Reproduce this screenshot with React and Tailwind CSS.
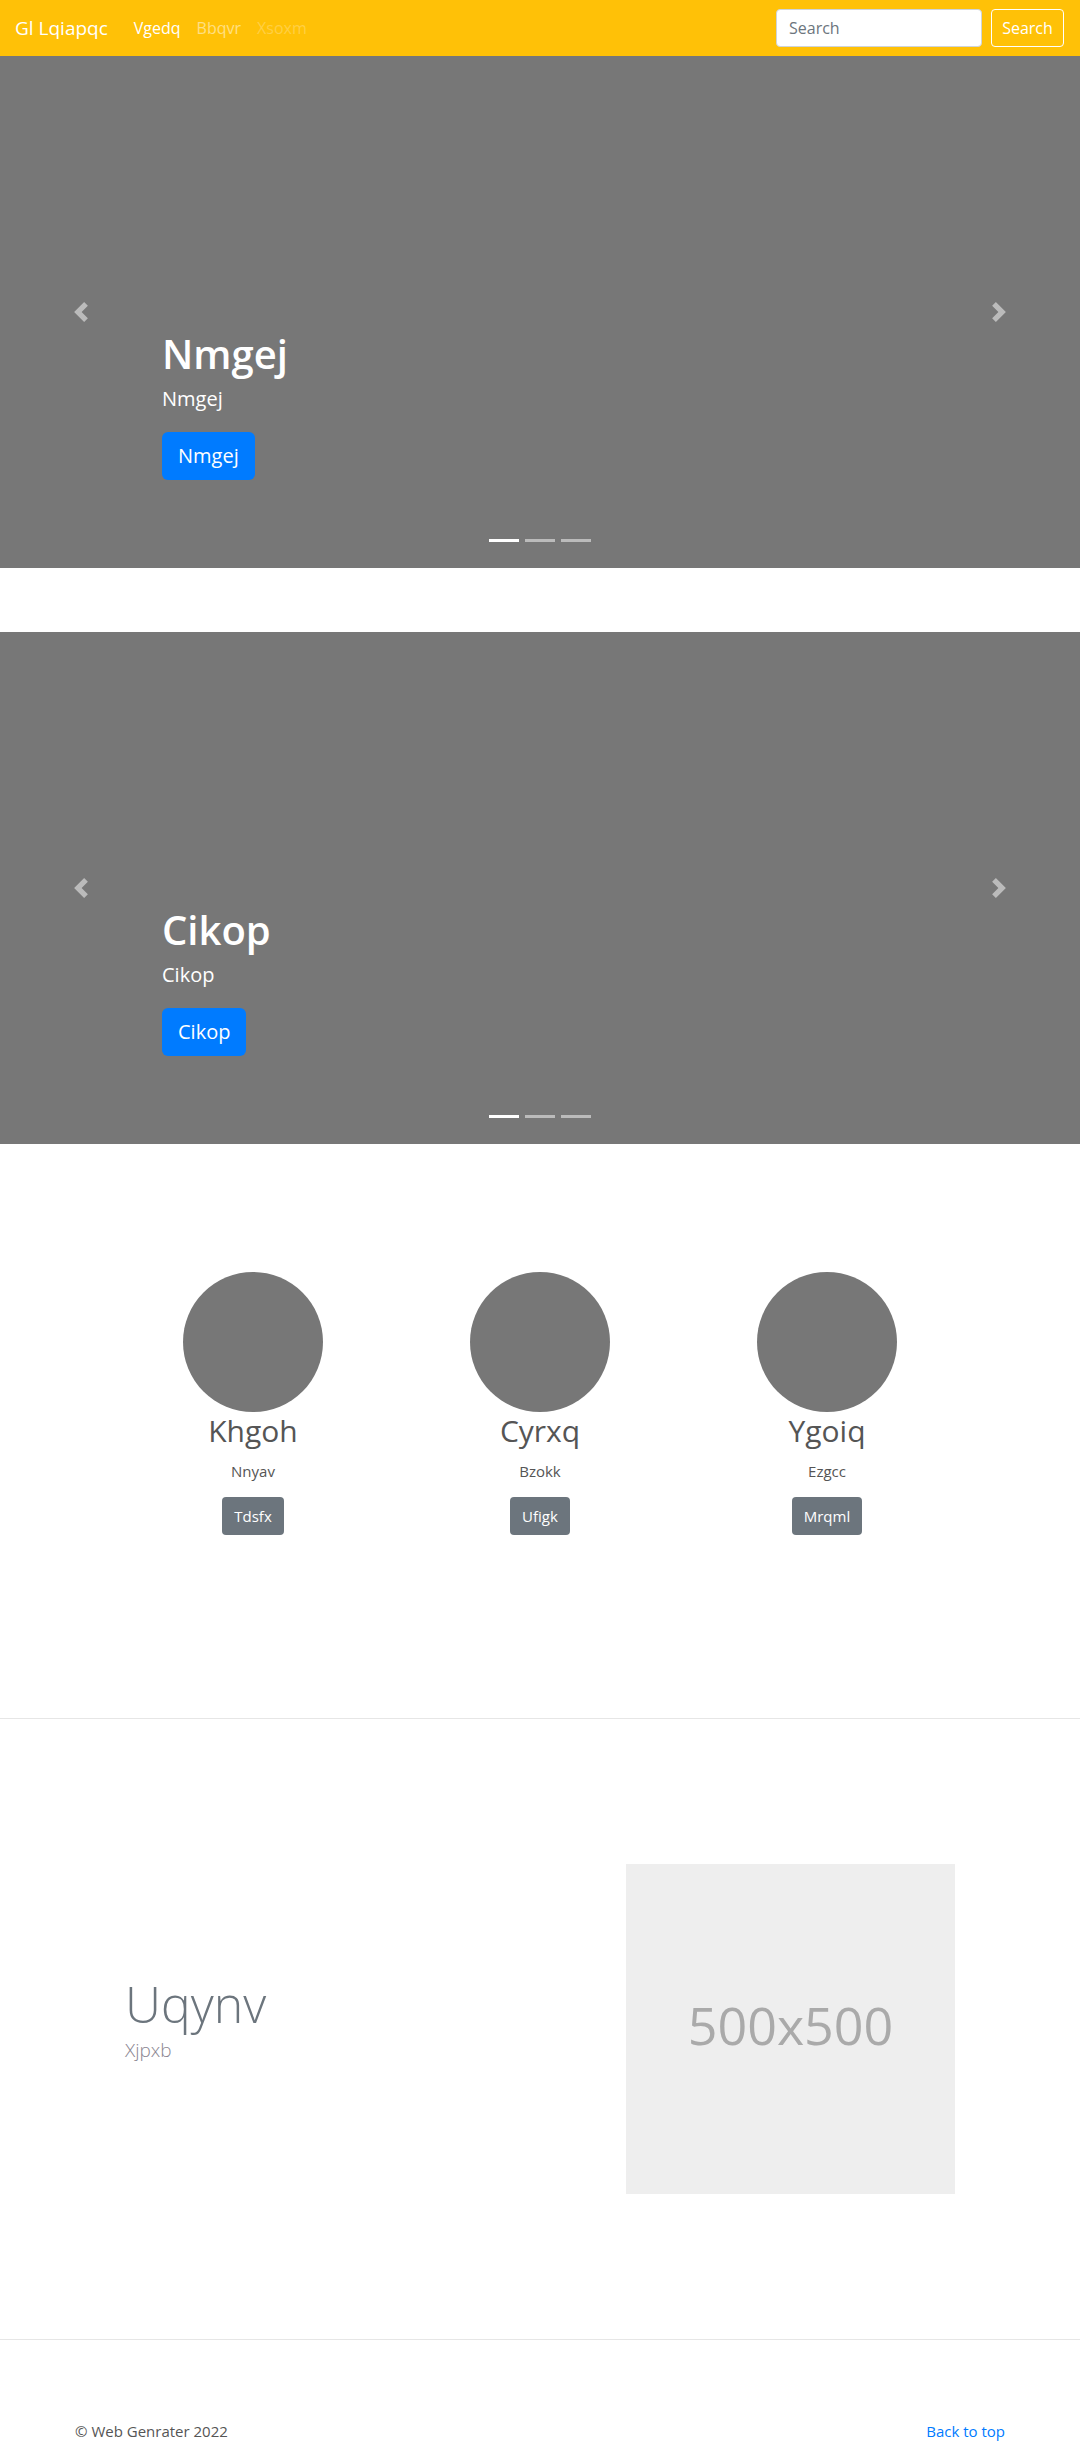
import React from "react";

const slides = [
  { title: "Nmgej" },
  { title: "Cikop" },
];

const people = [
  { name: "Khgoh", sub: "Nnyav", btn: "Tdsfx" },
  { name: "Cyrxq", sub: "Bzokk", btn: "Ufigk" },
  { name: "Ygoiq", sub: "Ezgcc", btn: "Mrqml" },
];

function Chevron({ flip }) {
  return (
    <svg width="20" height="20" viewBox="0 0 8 8" className={flip ? "rotate-180" : ""}>
      <path fill="#fff" d="M5.25 0l-4 4 4 4 1.5-1.5L4.25 4l2.5-2.5L5.25 0z" />
    </svg>
  );
}

function Carousel({ title }) {
  return (
    <div className="relative h-[512px] bg-[#777777] mb-[64px]">
      <div className="absolute left-0 top-0 bottom-0 w-[15%] flex items-center justify-center opacity-50">
        <Chevron />
      </div>
      <div className="absolute right-0 top-0 bottom-0 w-[15%] flex items-center justify-center opacity-50">
        <Chevron flip />
      </div>
      <div className="h-full flex flex-col justify-end pl-[162px] pb-[88px] text-white">
        <h1 className="text-[40px] leading-[48px] font-semibold">{title}</h1>
        <p className="text-[20px] leading-[30px] mt-[6px]">{title}</p>
        <div className="mt-[18px]">
          <button className="h-[48px] px-4 rounded-[6px] bg-[#007bff] text-[20px] text-white">{title}</button>
        </div>
      </div>
      <div className="absolute bottom-[26px] left-0 right-0 flex justify-center gap-[6px]">
        <span className="w-[30px] h-[3px] bg-white"></span>
        <span className="w-[30px] h-[3px] bg-white opacity-50"></span>
        <span className="w-[30px] h-[3px] bg-white opacity-50"></span>
      </div>
    </div>
  );
}

export default function App() {
  return (
    <div className="font-['Open_Sans',sans-serif] bg-white min-h-[2444px]">
      {/* navbar */}
      <nav className="h-[56px] bg-[#ffc107] flex items-center pl-[15px] pr-[16px]">
        <span className="text-[19px] text-white mr-[26px]">Gl Lqiapqc</span>
        <div className="flex gap-[16px] text-[16px]">
          <span className="text-white">Vgedq</span>
          <span className="text-white/50">Bbqvr</span>
          <span className="text-white/25">Xsoxm</span>
        </div>
        <div className="ml-auto flex items-center gap-[9px]">
          <input
            placeholder="Search"
            className="w-[206px] h-[38px] rounded-[4px] bg-white px-3 text-[16px] text-[#495057] placeholder:text-[#6c757d] border border-[#ced4da] outline-none"
          />
          <button className="w-[73px] h-[38px] rounded-[4px] border border-white text-white text-[16px]">Search</button>
        </div>
      </nav>

      {slides.map((s) => (
        <Carousel key={s.title} title={s.title} />
      ))}

      {/* circles */}
      <div className="pt-[64px] pb-[183px]">
        <div className="w-[861px] mx-auto grid grid-cols-3">
          {people.map((p) => (
            <div key={p.name} className="flex flex-col items-center">
              <div className="w-[140px] h-[140px] rounded-full bg-[#777777]"></div>
              <h2 className="text-[30px] leading-[36px] mt-[1px] text-[#555555]">{p.name}</h2>
              <p className="text-[15px] leading-[24px] mt-[10px] text-[#555555]">{p.sub}</p>
              <button className="mt-[14px] h-[38px] px-3 rounded-[4px] bg-[#6c757d] text-white text-[15px]">{p.btn}</button>
            </div>
          ))}
        </div>
      </div>

      <hr className="border-0 border-t border-[#e6e6e6]" />

      {/* featurette */}
      <div className="py-[145px]">
        <div className="w-[860px] mx-auto grid grid-cols-2 items-center">
          <div className="px-[15px] pb-[14px]">
            <h2 className="text-[50px] leading-[50px] font-light text-[#6c757d]">Uqynv</h2>
            <p className="text-[19px] leading-[30px] mt-[6px] font-light text-[#8a8590]">Xjpxb</p>
          </div>
          <div className="px-[15px] flex justify-end">
            <div className="w-[329px] h-[330px] bg-[#eeeeee] flex items-center justify-center">
              <span className="text-[52px] pb-[8px] text-[#aaaaaa]">500x500</span>
            </div>
          </div>
        </div>
      </div>

      <hr className="border-0 border-t border-[#e6e6e6]" />

      {/* footer */}
      <footer className="w-[960px] mx-auto px-[15px] pt-[79px] pb-[48px] flex justify-between text-[15px] leading-[24px]">
        <p className="text-[#555555]">© Web Genrater 2022</p>
        <a href="#" className="text-[#007bff]">Back to top</a>
      </footer>
    </div>
  );
}
